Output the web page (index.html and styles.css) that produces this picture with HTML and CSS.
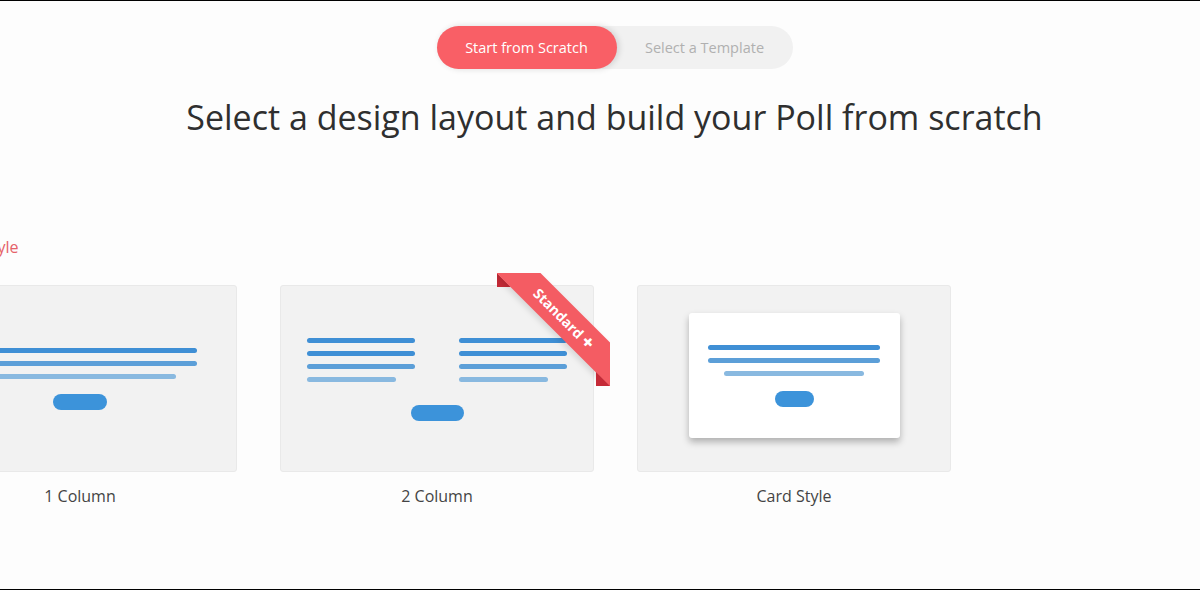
FILE: index.html
```html
<!DOCTYPE html>
<html>
<head>
<meta charset="utf-8">
<link rel="stylesheet" href="styles.css">
</head>
<body>
<div class="page">
  <div class="top">
    <div class="toggle">
      <span class="tab active">Start from Scratch</span>
      <span class="tab">Select a Template</span>
    </div>
    <h1 class="title">Select a design layout and build your Poll from scratch</h1>
  </div>
  <div class="gallery">
    <div class="section-label">Choose Style</div>
    <div class="cards">
      <div class="option">
        <div class="thumb one-col">
          <span class="bar dark w234"></span>
          <span class="bar mid w234"></span>
          <span class="bar light w192"></span>
          <span class="btn w54"></span>
        </div>
        <div class="label">1 Column</div>
      </div>
      <div class="option">
        <div class="thumb two-col">
          <div class="cols">
            <div class="col">
              <span class="bar dark"></span>
              <span class="bar dark"></span>
              <span class="bar mid"></span>
              <span class="bar light short"></span>
            </div>
            <div class="col">
              <span class="bar dark"></span>
              <span class="bar dark"></span>
              <span class="bar mid"></span>
              <span class="bar light short"></span>
            </div>
          </div>
          <span class="btn w53"></span>
          <div class="ribbon"><span class="ribbon-band">Standard <span class="plus">+</span></span></div>
        </div>
        <div class="label">2 Column</div>
      </div>
      <div class="option">
        <div class="thumb card-style">
          <div class="inner-card">
            <span class="bar dark w172"></span>
            <span class="bar mid w172"></span>
            <span class="bar light w140"></span>
            <span class="btn w39"></span>
          </div>
        </div>
        <div class="label">Card Style</div>
      </div>
    </div>
  </div>
</div>
</body>
</html>
```

FILE: styles.css
```css
html, body {
  margin: 0;
  padding: 0;
  background: #fdfdfd;
}

body {
  font-family: "Open Sans", "Noto Sans", sans-serif;
  color: #333;
  overflow: hidden;
}

.page {
  box-sizing: border-box;
  height: 590px;
  border-top: 1px solid #000;
  border-bottom: 1px solid #000;
  overflow: hidden;
}

.top {
  display: flex;
  flex-direction: column;
  align-items: center;
  padding-left: 29px;
}

.toggle {
  margin-top: 25px;
  display: flex;
  height: 43px;
  background: #f1f1f1;
  border-radius: 22px;
}

.tab {
  display: flex;
  align-items: center;
  justify-content: center;
  width: 176px;
  font-size: 14.5px;
  color: #b0b0b0;
  border-radius: 22px;
}

.tab.active {
  width: 180px;
  background: #f95f66;
  color: #fff;
  box-shadow: 2px 0 6px rgba(0, 0, 0, 0.14);
}

.title {
  margin: 28px 0 0;
  font-size: 34px;
  line-height: 40px;
  font-weight: 400;
  color: #2f2f2f;
}

.gallery {
  margin-top: 100px;
  margin-left: -77px;
}

.section-label {
  font-size: 16px;
  line-height: 20px;
  color: #e5626a;
}

.cards {
  margin-top: 28px;
  display: flex;
  gap: 43px;
}

.option {
  width: 314px;
  display: flex;
  flex-direction: column;
  align-items: center;
}

.thumb {
  position: relative;
  box-sizing: border-box;
  width: 314px;
  height: 187px;
  background: #f2f2f2;
  border: 1px solid #e9e9e9;
  border-radius: 3px;
  display: flex;
  flex-direction: column;
  align-items: center;
}

.label {
  margin-top: 14px;
  font-size: 16px;
  line-height: 20px;
  color: #444;
}

.bar {
  display: block;
  height: 5px;
  border-radius: 3px;
  margin-bottom: 8px;
}

.bar.dark { background: #3f8fd5; }
.bar.mid { background: #5c9fd8; }
.bar.light { background: #89b9e0; }

.w234 { width: 234px; }
.w192 { width: 192px; }
.w172 { width: 172px; }
.w140 { width: 140px; }

.btn {
  display: block;
  height: 16px;
  border-radius: 8px;
  background: #3c93da;
}

.w54 { width: 54px; }
.w53 { width: 53px; }
.w39 { width: 39px; }

.one-col {
  padding-top: 62px;
}

.one-col .btn {
  margin-top: 7px;
}

.two-col {
  padding-top: 52px;
}

.cols {
  display: flex;
  gap: 44px;
}

.col {
  width: 108px;
}

.col .short {
  width: 89px;
}

.two-col .btn {
  margin-top: 15px;
}

.card-style {
  justify-content: center;
}

.inner-card {
  box-sizing: border-box;
  width: 211px;
  height: 125px;
  margin-top: -6px;
  padding-top: 32px;
  background: #fff;
  border-radius: 3px;
  box-shadow: 0 4px 7px rgba(0, 0, 0, 0.28);
  display: flex;
  flex-direction: column;
  align-items: center;
}

.inner-card .btn {
  margin-top: 7px;
}

.ribbon {
  position: absolute;
  top: -13px;
  right: -17px;
  width: 113px;
  height: 113px;
  overflow: hidden;
}

.ribbon::before,
.ribbon::after {
  content: "";
  position: absolute;
  border: 7px solid #c52a37;
  border-top-color: transparent;
  border-right-color: transparent;
}

.ribbon::before {
  top: 0;
  left: 0;
}

.ribbon::after {
  bottom: 0;
  right: 0;
}

.ribbon-band {
  position: absolute;
  left: -18px;
  top: 30px;
  width: 170px;
  height: 31px;
  line-height: 31px;
  text-align: center;
  background: #f45c63;
  color: #fff;
  font-size: 14px;
  font-weight: 700;
  transform: rotate(45deg);
  box-shadow: 0 3px 6px rgba(0, 0, 0, 0.12);
}

.plus {
  font-size: 19px;
  font-weight: 800;
  line-height: 31px;
  vertical-align: top;
}
```
